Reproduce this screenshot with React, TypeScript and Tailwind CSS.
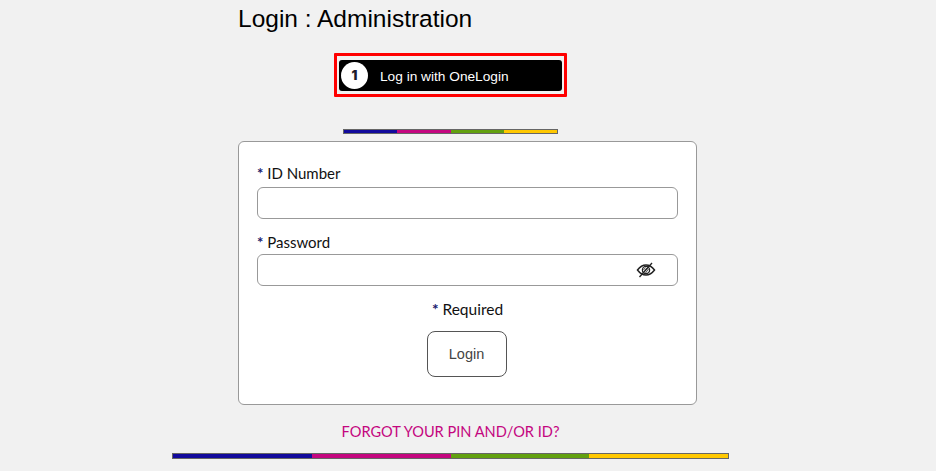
const labelFont = "font-['Lato','Noto_Sans',sans-serif]";

const ColorBar = ({ className = '' }: { className?: string }) => (
  <div className={`flex border border-[#666] ${className}`}>
    <div className="flex-1 bg-[#120a9c]" />
    <div className="flex-1 bg-[#c4067f]" />
    <div className="flex-1 bg-[#62a00f]" />
    <div className="flex-1 bg-[#ffc800]" />
  </div>
);

const EyeSlash = () => (
  <svg width="20" height="16" viewBox="0 0 20 16" fill="none" stroke="#222" aria-hidden="true">
    <path d="M1.500 8C4 4.600 6.800 3 10 3s6 1.600 8.500 5c-2.500 3.400-5.300 5-8.500 5s-6-1.600-8.500-5z" strokeWidth="1.500" />
    <circle cx="10" cy="8" r="3.600" strokeWidth="1.300" />
    <path d="M8 10l3.500-4.500M9.500 11l3-4M7.500 8l2-2.500" strokeWidth="0.800" />
    <path d="M3.500 15L16 1" strokeWidth="1.300" />
  </svg>
);

export default function App() {
  return (
    <div className="h-[471px] w-[936px] overflow-hidden bg-[#f1f1f1]">
      <div className="flex w-[901px] flex-col items-center">
        <h1 className="mt-[5px] ml-[34px] h-[28px] w-[459px] font-['Liberation_Sans',Arial,sans-serif] text-[24.5px] leading-[28px] font-normal text-black">
          Login : Administration
        </h1>

        <a className="mt-[20px] box-border flex h-[44px] w-[233px] rounded-[1px] border-[3px] border-[#ff0000] px-[2px] pt-[4px] pb-[2px]">
          <div className="flex h-[31px] w-full items-center rounded-[3px] bg-black pl-[2px]">
            <span className="flex h-[27px] w-[27px] items-center justify-center rounded-full bg-white font-['Inter',sans-serif] text-[13px] font-black text-[#1c1c2b]">
              1
            </span>
            <span className="ml-[12px] pt-[3px] font-['Liberation_Sans',Arial,sans-serif] text-[13.7px] text-white">
              Log in with OneLogin
            </span>
          </div>
        </a>

        <ColorBar className="mt-[32px] h-[5px] w-[215px]" />

        <form className="mt-[7px] ml-[34px] h-[264px] w-[459px] rounded-[6px] border border-[#999] bg-white px-[18px] pt-[20px]">
          <label className={`block h-[22px] text-[15px] leading-[22px] text-[#111] ${labelFont}`}>
            <span className="font-bold text-[#1a1a6e]">*</span> ID Number
          </label>
          <input
            type="text"
            className="mt-[3px] block h-[32px] w-full rounded-[6px] border border-[#999] bg-white"
          />

          <label className={`mt-[12px] block h-[22px] text-[15px] leading-[22px] text-[#111] ${labelFont}`}>
            <span className="font-bold text-[#1a1a6e]">*</span> Password
          </label>
          <div className="mt-[1px] flex h-[32px] items-center justify-end rounded-[6px] border border-[#999] bg-white pr-[21px]">
            <EyeSlash />
          </div>

          <p className={`mt-[12px] text-center text-[15.500px] leading-[22px] text-[#111] ${labelFont}`}>
            <span className="font-bold text-[#1a1a6e]">*</span> Required
          </p>
          <div className="mt-[11px] flex justify-center pr-[2px]">
            <button
              type="button"
              className="h-[46px] w-[80px] rounded-[8px] border border-[#555] bg-white pt-[1px] font-['Liberation_Sans',Arial,sans-serif] text-[14.500px] text-[#444]"
            >
              Login
            </button>
          </div>
        </form>

        <p className={`mt-[17px] text-center text-[14.600px] leading-[20px] text-[#c4067f] ${labelFont}`}>
          FORGOT YOUR PIN AND/OR ID?
        </p>

        <ColorBar className="mt-[11px] h-[6px] w-[557px] shrink-0" />
      </div>
    </div>
  );
}
